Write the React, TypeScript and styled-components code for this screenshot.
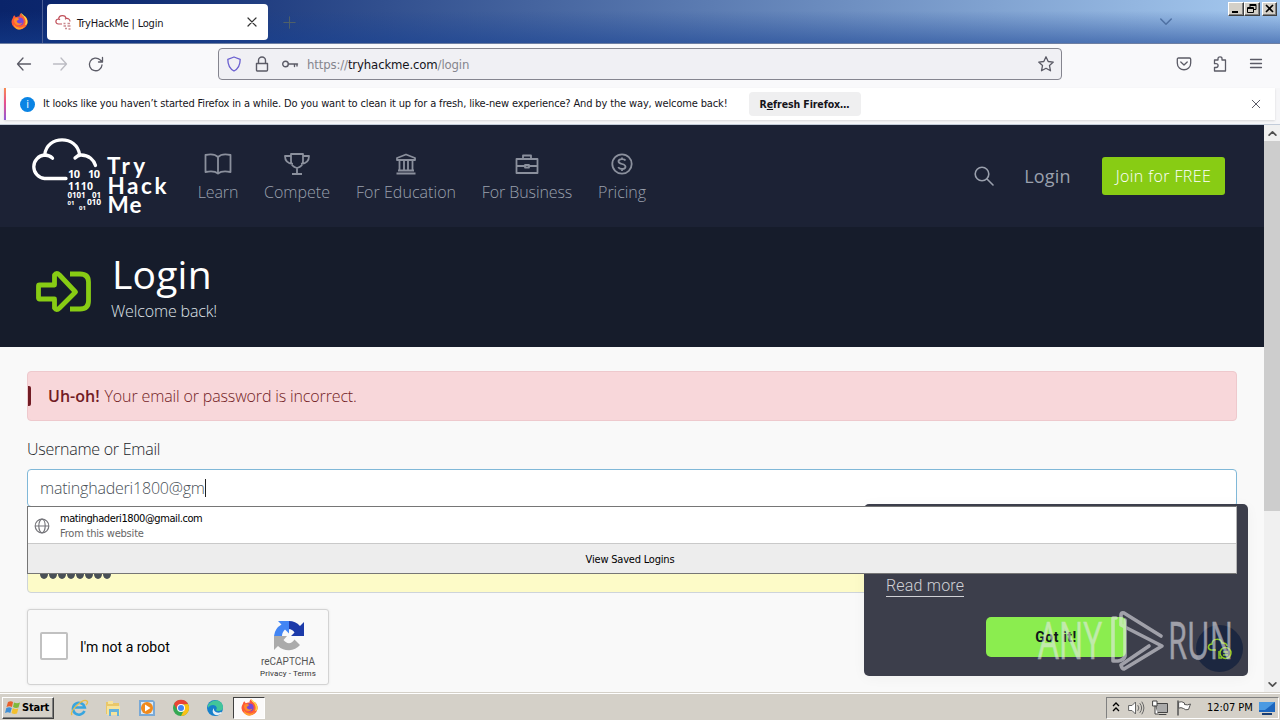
import React from 'react'
import styled, { createGlobalStyle } from 'styled-components'

const UI = `'DejaVu Sans Condensed', 'DejaVu Sans', sans-serif`
const BODY = `'Open Sans', 'Noto Sans', sans-serif`

const GlobalStyle = createGlobalStyle`
  * { box-sizing: border-box; }
  body { margin: 0; overflow: hidden; }
  button { padding: 0; border: 0; background: none; font: inherit; color: inherit; }
  svg { display: block; flex: none; overflow: visible; }
`

const Screen = styled.div`
  width: 1280px;
  height: 720px;
  display: flex;
  flex-direction: column;
  overflow: hidden;
  font-family: ${UI};
  font-size: 11px;
`

// text whose tracking is tuned to the width of its label
const Label = styled.span<{ $ls?: number }>`
  white-space: nowrap;
  letter-spacing: ${p => p.$ls || 0}px;
`

/* ---------- browser chrome ---------- */
const TabStrip = styled.div`
  height: 44px;
  flex: none;
  display: flex;
  padding-right: 3px;
  border-bottom: 1px solid #6e7fa2;
  background:
    linear-gradient(to bottom, transparent 25%, rgba(22, 64, 145, 0.55) 100%),
    linear-gradient(to right, #0a246a 0%, #0d2970 8%, #a6caf0 100%);
`
const HomeTab = styled.div`
  width: 43px;
  padding: 13px 0 0 11px;
  border-right: 1px solid #4b5f96;
`
const Tab = styled.div`
  width: 221px;
  height: 36px;
  margin: 4px 0 0 4px;
  padding: 0 11px 0 8px;
  display: flex;
  align-items: center;
  gap: 5px;
  border-radius: 4px;
  background: #fff;
  color: #15141a;
  svg:last-child { margin-left: auto; }
`
const TabTitle = styled.span`
  padding-top: 2px;
  white-space: nowrap;
  letter-spacing: -0.22px;
`
const NewTab = styled.div`
  flex: 1;
  padding: 16px 0 0 15px;
`
const ListTabs = styled.div`
  width: 68px;
  padding-top: 16px;
`
const WindowButtons = styled.div`
  display: flex;
  height: 14px;
  margin-top: 2px;
`
const WinButton = styled.div<{ $gap?: boolean }>`
  width: ${p => (p.$gap ? 15 : 16)}px;
  height: 14px;
  margin-left: ${p => (p.$gap ? 2 : 0)}px;
  background: #d4d0c8;
  border: 1px solid;
  border-color: #fff #404040 #404040 #fff;
  box-shadow: inset -1px -1px #808080;
`
const Toolbar = styled.div`
  height: 44px;
  flex: none;
  display: flex;
  align-items: center;
  padding: 0 16px 4px;
  background: #f9f9fb;
  color: #5b5b66;
`
const NavButtons = styled.div`
  width: 202px;
  display: flex;
  gap: 20px;
`
const UrlBar = styled.div`
  width: 844px;
  height: 32px;
  display: flex;
  align-items: center;
  padding: 0 7px;
  border: 1px solid #85858f;
  border-radius: 4px;
  background: #f0f0f4;
`
const Url = styled.div`
  flex: 1;
  margin-left: 9px;
  font-size: 13px;
  letter-spacing: -0.13px;
  color: #85858d;
  b { font-weight: 400; color: #15141a; }
`
const UrlIcons = styled.div`
  display: flex;
  gap: 12px;
`
const ToolbarEnd = styled.div`
  margin-left: auto;
  display: flex;
  gap: 20px;
`
const Notice = styled.div`
  height: 37px;
  flex: none;
  padding: 0 5px 5px 4px;
  border-bottom: 1px solid #c3ccd9;
  background: #f6f6f8;
`
const NoticeBar = styled.div`
  height: 32px;
  display: flex;
  align-items: center;
  padding-right: 14px;
  background: #fff;
  box-shadow: 0 1px 2px rgba(0, 0, 0, 0.12);
  color: #15141a;
`
const NoticeText = styled.span`
  padding-bottom: 1px;
  white-space: nowrap;
  letter-spacing: -0.145px;
`
const Stripe = styled.i`
  width: 2px;
  height: 32px;
  background: linear-gradient(#f88c50, #e8508c 45%, #9059d8);
`
const InfoDot = styled.span`
  width: 15px;
  height: 15px;
  margin: 0 8px 0 14px;
  border-radius: 50%;
  background: #0a84e4;
  color: #fff;
  font-size: 11px;
  line-height: 15px;
  text-align: center;
`
const RefreshButton = styled.button`
  width: 112px;
  height: 24px;
  margin: 0 auto 0 21px;
  border-radius: 4px;
  background: #efeff0;
  font-size: 10.5px;
  font-weight: 700;
  white-space: nowrap;
  letter-spacing: -0.1px;
`

/* ---------- web page ---------- */
const Viewport = styled.div`
  position: relative;
  height: 567px;
  flex: none;
  display: flex;
  overflow: hidden;
  font-family: ${BODY};
`
const Page = styled.div`
  width: 1264px;
  background: #f9f9f9;
`
const Scrollbar = styled.div`
  width: 16px;
  display: flex;
  flex-direction: column;
  background: #f0f0f0;
`
const ScrollArrow = styled.div`
  height: 16px;
  display: flex;
  align-items: center;
  justify-content: center;
`
const Thumb = styled.div`
  height: 370px;
  margin-bottom: auto;
  background: #cdcdcd;
`
const SiteHeader = styled.header`
  height: 102px;
  display: flex;
  align-items: center;
  padding: 0 39px 0 28px;
  background: #1c2235;
  color: #9aa0ad;
`
const SiteNav = styled.nav`
  display: flex;
  gap: 26px;
  margin: 3px 0 0 28px;
  font-size: 16px;
  font-weight: 300;
`
const NavItem = styled.a<{ $w: number }>`
  width: ${p => p.$w}px;
  display: flex;
  flex-direction: column;
  align-items: center;
  gap: 4px;
  line-height: 24px;
`
const HeaderEnd = styled.div`
  margin-left: auto;
  display: flex;
  align-items: center;
  font-size: 18px;
`
const LoginLink = styled.a`
  width: 47px;
  margin: 0 31px 0 30px;
  display: flex;
  justify-content: center;
`
const JoinButton = styled.button`
  width: 123px;
  height: 38px;
  border-radius: 3px;
  background: #88cc14;
  color: #fff;
  font-size: 16px;
  font-weight: 300;
`
const Hero = styled.section`
  height: 120px;
  display: flex;
  padding: 0 35px;
  background: #161c2b;
  color: #fff;
`
const HeroIcon = styled.div`
  width: 76px;
  padding-top: 43px;
`
const HeroTitle = styled.h1`
  margin: 18px 0 0 1px;
  font-size: 39px;
  font-weight: 400;
  line-height: 58px;
`
const HeroSub = styled.p`
  margin: -4px 0 0;
  font-size: 16px;
  font-weight: 300;
  line-height: 24px;
  color: #dfe2e8;
`
const Form = styled.form`
  padding: 24px 27px;
  font-size: 16px;
  font-weight: 300;
`
const Alert = styled.div`
  height: 50px;
  display: flex;
  align-items: center;
  gap: 5px;
  border: 1px solid #eec9cd;
  border-radius: 4px;
  background: #f8d7da;
  color: #721c24;
  b { font-weight: 600; }
`
const AlertMark = styled.i`
  width: 3px;
  height: 20px;
  margin-right: 12px;
  border-radius: 0 2px 2px 0;
  background: #721c24;
`
const FieldLabel = styled.label`
  display: block;
  height: 48px;
  padding-top: 16px;
  line-height: 24px;
  color: #212529;
`
const Field = styled.div<{ $focus?: boolean }>`
  height: 38px;
  display: flex;
  align-items: center;
  padding: 0 12px;
  border: 1px solid ${p => (p.$focus ? '#80b8d8' : '#ced4da')};
  border-radius: 4px;
  background: ${p => (p.$focus ? '#fff' : '#fdfbc8')};
  color: #495057;
`
const Caret = styled.i`
  width: 1px;
  height: 18px;
  background: #222;
`
const Dots = styled.div`
  display: flex;
  gap: 1px;
  i { width: 8px; height: 10px; border-radius: 50%; background: #495057; }
`
const Captcha = styled.div`
  width: 302px;
  height: 76px;
  margin-top: 16px;
  display: flex;
  align-items: center;
  padding: 0 10px 0 12px;
  border: 1px solid #d3d3d3;
  border-radius: 3px;
  background: #f9f9f9;
  box-shadow: 0 0 3px rgba(0, 0, 0, 0.08);
  font-family: Roboto, sans-serif;
  font-size: 14px;
  font-weight: 400;
  color: #000;
`
const CheckBox = styled.span`
  width: 28px;
  height: 28px;
  margin: 0 12px 2px 0;
  border: 2px solid #c1c1c1;
  border-radius: 2px;
  background: #fff;
`
const CaptchaBrand = styled.div`
  width: 60px;
  margin-left: auto;
  padding-top: 5px;
  display: flex;
  flex-direction: column;
  align-items: center;
  font-size: 10px;
  line-height: 12px;
  color: #555;
  svg { margin: 0 0 4px 2px; }
  small { font-size: 8px; color: #333; line-height: 11px; white-space: nowrap; letter-spacing: 0.1px; }
`

/* ---------- overlays above the page ---------- */
const CookiePanel = styled.aside`
  position: absolute;
  left: 864px;
  top: 379px;
  width: 384px;
  height: 172px;
  padding: 70px 22px 0;
  border-radius: 5px;
  background: #3c3e4b;
  box-shadow: 0 2px 14px rgba(0, 0, 0, 0.04);
  color: #d0d1d6;
  font-family: Roboto, sans-serif;
  font-size: 16px;
  font-weight: 300;
`
const ReadMore = styled.a`
  display: table;
  height: 21px;
  line-height: 20px;
  padding-top: 2px;
  border-bottom: 1px solid #d0d1d6;
  letter-spacing: 0.2px;
`
const GotIt = styled.button`
  display: block;
  width: 140px;
  height: 40px;
  margin: 20px 0 0 100px;
  border-radius: 5px;
  background: #8bed4f;
  color: #10151a;
  font-size: 14px;
  font-weight: 700;
  letter-spacing: 0.5px;
`
const LoginPopup = styled.div`
  position: absolute;
  left: 27px;
  top: 381px;
  width: 1210px;
  height: 68px;
  border: 1px solid #767676;
  border-right-color: #b5b5b5;
  background: #fff;
  font-family: ${UI};
  font-size: 11px;
  color: #000;
`
const SavedLogin = styled.div`
  height: 37px;
  display: flex;
  align-items: center;
  gap: 10px;
  padding: 2px 0 0 6px;
  line-height: 15px;
  letter-spacing: -0.2px;
  border-bottom: 1px solid #c9c9c9;
  small { display: block; font-size: 11px; color: #666; }
`
const ViewLogins = styled.div`
  height: 29px;
  display: flex;
  align-items: center;
  justify-content: center;
  padding: 2px 4px 0 0;
  background: #ededed;
`
const Watermark = styled.div`
  position: absolute;
  left: 1036px;
  top: 483px;
`

/* ---------- taskbar ---------- */
const Taskbar = styled.footer`
  height: 28px;
  flex: none;
  display: flex;
  align-items: center;
  padding: 2px 1px 0 2px;
  border-top: 1px solid #d4d0c8;
  box-shadow: inset 0 1px #fff;
  background: #d4d0c8;
`
const StartButton = styled.button`
  width: 52px;
  height: 22px;
  display: flex;
  align-items: center;
  gap: 1px;
  padding-left: 2px;
  border: 1px solid;
  border-color: #fff #404040 #404040 #fff;
  box-shadow: inset -1px -1px #808080;
  font-size: 11px;
  font-weight: 700;
`
const QuickLaunch = styled.div`
  display: flex;
  gap: 16px;
  margin: 0 9px 0 16px;
`
const ActiveTask = styled.div`
  width: 32px;
  height: 22px;
  padding: 1px 0 0 7px;
  border: 1px solid;
  border-color: #404040 #fff #fff #404040;
  background: #fbfafa;
`
const Tray = styled.div`
  width: 173px;
  height: 22px;
  margin-left: auto;
  display: flex;
  align-items: center;
  padding: 0 2px 0 5px;
  gap: 8px;
  border: 1px solid;
  border-color: #808080 #fff #fff #808080;
`
const Clock = styled.time`
  margin-left: 7px;
  margin-right: -2px;
  white-space: nowrap;
  letter-spacing: -0.05px;
`

type StrokeProps = { size?: number; box?: string; w?: number; color?: string; children: React.ReactNode }

const Stroke = ({ size = 16, box = '0 0 16 16', w = 1.3, color = 'currentColor', children }: StrokeProps) => (
  <svg width={size} height={size} viewBox={box} fill="none" stroke={color} strokeWidth={w} strokeLinecap="round" strokeLinejoin="round">
    {children}
  </svg>
)

const Firefox = ({ size = 17 }) => (
  <svg width={size} height={size} viewBox="0 0 18 18">
    <path d="M2 5c.3-1.2.8-2 1.5-2.700L5 4.600C6.500 4 7.500 3.500 9 4c-.3-1.500.5-3 1.700-4 .2 2 1.500 2.700 2.700 4l1.200-.7C17 5.500 18 8 17.500 10.500A8.600 8.600 0 0 1 .5 9.500C.5 8 1 6.500 2 5Z" fill="#ff5a36" />
    <path d="M10.700 0c.2 2 1.500 2.700 2.700 4 2 2.500 3 6 1 9l2.600-1C19 6 14 3 10.700 0Z" fill="#ffd33c" />
    <path d="M3 12c2 4 9 5 12 1-1.500 4-6 5.500-9 4-2-1-3-3-3-5Z" fill="#ffa22b" />
    <circle cx="9.200" cy="9" r="4.200" fill="#7647d8" />
    <path d="M3.500 6c2-1.400 4-.8 5.500.6-1.600.2-1.500 1.400-3 1.700.2 3 4 3.400 6 1.700-1 3.500-6 4-8 .5C3 8.800 3 7.500 3.500 6Z" fill="#ff8a2a" />
  </svg>
)

const FavIcon = () => (
  <svg width="17" height="17" viewBox="0 0 17 17" fill="none" stroke="#c0505a" strokeWidth="1.200">
    <path d="M7 10H3.500C-.2 9.700.2 5 3.600 5 4 .5 10.500.5 11 4.500c2.500-.4 4 1 4 3M3.600 5l1.500.6M11 4.500l-1 .7" />
    <path d="M8.500 9.500h2M12.500 9.500h2.500M8.500 12h2.500M12.500 12h3M10 14.500h2M13.500 15h2" strokeWidth="1.500" stroke="#c98b91" />
  </svg>
)

const Logo = () => (
  <svg width="142" height="82" viewBox="28 10 142 82" fill="none">
    <path
      d="M66 53.500H44.500a11.800 11.800 0 0 1 0-23.500q5 0 8 3.200M44.800 29.500C47 10 77 10 79.500 29.500M75 33q3-3 6-3c8 0 13 5 14.500 10.500"
      stroke="#fff" strokeWidth="3.300" strokeLinecap="round"
    />
    <g fill="#fff" fontFamily="'Noto Sans', sans-serif" fontWeight="700">
      <text x="68" y="53" fontSize="11" textLength="12">10</text>
      <text x="88" y="53" fontSize="11" textLength="12">10</text>
      <text x="68" y="64.500" fontSize="10.500" textLength="25">1110</text>
      <text x="67.500" y="73" fontSize="8" textLength="18">0101</text>
      <text x="92" y="73" fontSize="8" textLength="9">01</text>
      <text x="67.500" y="80" fontSize="6" textLength="7">01</text>
      <text x="87" y="79.500" fontSize="8.500" textLength="14">010</text>
      <text x="79" y="85" fontSize="6" textLength="7">01</text>
      <g fontFamily="Lato, sans-serif" fontSize="22.500">
        <text x="107" y="49" textLength="38">Try</text>
        <text x="107.500" y="69" textLength="59">Hack</text>
        <text x="107.500" y="88" textLength="34">Me</text>
      </g>
    </g>
  </svg>
)

const RecaptchaIcon = () => (
  <svg width="32" height="32" viewBox="0 0 32 32">
    <path d="M31 16V2l-4 4A15 15 0 0 0 15.500 1v8a7 7 0 0 1 6 3.500L18 16Z" fill="#1c3aa9" />
    <path d="M16 1H5l3.500 3.500A15 15 0 0 0 1 16h8c0-3 1.500-5 3-6.500l4 4Z" fill="#4285f4" />
    <path d="M1 16v14l4-4a15 15 0 0 0 22-1l-5.500-5.500c-3 5-8 4.500-11 .5L14 16Z" fill="#ababab" />
  </svg>
)

const AnyRun = () => (
  <svg width="208" height="66" viewBox="1036 608 208 66">
    <circle cx="1219.500" cy="648.500" r="23.500" fill="#1c2740" />
    <g fill="none" stroke="#8ac926" strokeWidth="1.500">
      <path d="M1216 650h-5c-4-1-3-6 1-6 0-6 9-6 10-1 3-.5 5 1 5 3" />
      <circle cx="1225.500" cy="653" r="5.500" />
      <path d="M1219 651v7h3M1223 652h5M1223 655h5" />
    </g>
    <g opacity="0.58">
      <g fill="#e8e8ee" stroke="#e8e8ee" strokeWidth="0.500" fontFamily="'Open Sans', sans-serif" fontWeight="400" fontSize="52">
        <text x="1038" y="659" textLength="64" lengthAdjust="spacingAndGlyphs">ANY</text>
        <text x="1168" y="659" textLength="65" lengthAdjust="spacingAndGlyphs">RUN</text>
      </g>
      <g fill="none" stroke="#e8e8ee" strokeWidth="3.600" strokeLinejoin="round" strokeLinecap="round">
        <path d="M1116 618h-3v43h5q6-1 7-5V620" />
        <path d="M1161 636l-37-23q-3-1-3 2v10l41 21-38 23q-2 0-3-4l28-19" />
      </g>
    </g>
  </svg>
)

const Globe = () => (
  <Stroke color="#77777c" w={1.2}>
    <circle cx="8" cy="8" r="6.800" />
    <ellipse cx="8" cy="8" rx="3.200" ry="6.800" />
    <path d="M1.500 8h13" />
  </Stroke>
)

const NAV = [
  { text: 'Learn', w: 40, ls: -0.1, icon: <path d="M14 5C11 2 6 2 1.500 3v17c4.500-1 9.500-1 12.500 1.500C17 19 22 19 26.500 20V3C22 2 17 2 14 5Zm0 0v16" /> },
  { text: 'Compete', w: 66, ls: 0, icon: <path d="M8 2h12v7c0 4-2 6-6 7-4-1-6-3-6-7ZM8 4H2c0 5 2 7.500 8 8M20 4h6c0 5-2 7.500-8 8M14 16v6m-5 0h10" /> },
  { text: 'For Education', w: 100, ls: 0.05, icon: <path d="M5 8V6l9-3.500L23 6v2ZM7.500 9v9M12 9v9M16 9v9M20.500 9v9M6 18.500h16M4.500 21.500h19" /> },
  { text: 'For Business', w: 90, ls: -0.1, icon: <path d="M3.500 7h21v14h-21ZM10 7V3.500h8V7M3.500 14H12m4 0h8.500M12 13h4v2.500h-4Z" /> },
  { text: 'Pricing', w: 48, ls: -0.05, icon: <><circle cx="14" cy="12" r="9.700" /><path d="M17.500 8.500c-1-2-7-2-7 .8 0 3.700 7 1.700 7 5.400 0 3-6 3-7.300.5M14 5.500v2M14 17v2" /></> },
]

const BrowserChrome = () => (
  <>
    <TabStrip>
      <HomeTab><Firefox /></HomeTab>
      <Tab>
        <FavIcon />
        <TabTitle>TryHackMe | Login</TabTitle>
        <Stroke size={10} box="0 0 10 10" w={1.2} color="#333"><path d="M1 1l8 8M9 1l-8 8" /></Stroke>
      </Tab>
      <NewTab><Stroke size={13} color="#4f6068" w={1.3}><path d="M8 1v14M1 8h14" /></Stroke></NewTab>
      <ListTabs><Stroke size={12} color="#4f71a3" w={2}><path d="M1 4l7 7 7-7" /></Stroke></ListTabs>
      <WindowButtons>
        <WinButton><svg width="12" height="11"><path d="M3 9h6" stroke="#000" strokeWidth="2" /></svg></WinButton>
        <WinButton><svg width="13" height="11" fill="none" stroke="#000"><path d="M5 1.500h6v5H9M5 2.500h6M5 1v3M2.500 4.500h6v5h-6ZM2 5.500h7" /></svg></WinButton>
        <WinButton $gap><svg width="12" height="11"><path d="M3 2l7 7M10 2l-7 7" stroke="#000" strokeWidth="1.600" /></svg></WinButton>
      </WindowButtons>
    </TabStrip>
    <Toolbar>
      <NavButtons>
        <Stroke><path d="M14.500 8h-13M7 2L1.500 8 7 14" /></Stroke>
        <Stroke color="#bcbcc3"><path d="M1.500 8h13M9 2l5.500 6L9 14" /></Stroke>
        <Stroke><path d="M14 9a6.300 6.300 0 1 1-2-5.200L14.500 6V1.500M10.500 6h4" /></Stroke>
      </NavButtons>
      <UrlBar>
        <UrlIcons>
          <Stroke color="#6a5fd0"><path d="M8 1L1.800 3.300C1.800 10 4 13 8 15c4-2 6.200-5 6.200-11.700Z" /></Stroke>
          <Stroke w={1.4}><path d="M2.500 7.500h11V14a1 1 0 0 1-1 1h-9a1 1 0 0 1-1-1ZM4.500 7V4.500a3.500 3.500 0 0 1 7 0V7" /></Stroke>
          <Stroke w={1.4}><circle cx="3.500" cy="8" r="2.800" /><path d="M6.500 8H15.500M12.500 8v2.500M15 8v2" /></Stroke>
        </UrlIcons>
        <Url>https://<b>tryhackme.com</b>/login</Url>
        <Stroke><path d="M8 .8l2.200 4.700 5.100.6-3.800 3.500 1 5.200L8 12.300l-4.500 2.500 1-5.200L.7 6.100l5.100-.6Z" /></Stroke>
      </UrlBar>
      <ToolbarEnd>
        <Stroke><path d="M2.500 2h11c.8 0 1.200.5 1.200 1.200V7c0 9-13.400 9-13.400 0V3.200C1.300 2.500 1.700 2 2.500 2ZM4.800 6L8 9l3.200-3" /></Stroke>
        <Stroke><path d="M6 4V2.500C6 .3 10 .3 10 2.500V4h3.500v11h-11v-3.500H4c2.800 0 2.800-3.800 0-3.800H2.500V4Z" /></Stroke>
        <Stroke w={1.3}><path d="M2.500 3.500h11M2.500 7.500h11M2.500 11.500h11" /></Stroke>
      </ToolbarEnd>
    </Toolbar>
    <Notice>
      <NoticeBar>
        <Stripe />
        <InfoDot>i</InfoDot>
        <NoticeText>It looks like you haven’t started Firefox in a while. Do you want to clean it up for a fresh, like-new experience? And by the way, welcome back!</NoticeText>
        <RefreshButton>R<u>e</u>fresh Firefox…</RefreshButton>
        <Stroke size={10} w={1.6} color="#5b5b66"><path d="M2 2l12 12M14 2L2 14" /></Stroke>
      </NoticeBar>
    </Notice>
  </>
)

const LoginPage = () => (
  <Page>
    <SiteHeader>
      <Logo />
      <SiteNav>
        {NAV.map(item => (
          <NavItem key={item.text} $w={item.w}>
            <svg width="28" height="24" viewBox="0 0 28 24" fill="none" stroke="#8b909d" strokeWidth="1.800" strokeLinejoin="round">{item.icon}</svg>
            <Label $ls={item.ls}>{item.text}</Label>
          </NavItem>
        ))}
      </SiteNav>
      <HeaderEnd>
        <Stroke size={20} box="0 0 20 20" w={1.6}><circle cx="8" cy="8" r="6.800" /><path d="M13 13l6 6" /></Stroke>
        <LoginLink><Label $ls={0.15}>Login</Label></LoginLink>
        <JoinButton><Label $ls={0.4}>Join for FREE</Label></JoinButton>
      </HeaderEnd>
    </SiteHeader>
    <Hero>
      <HeroIcon>
        <svg width="57" height="44" viewBox="0 0 57 44" fill="none" stroke="#88cc14" strokeWidth="4.800" strokeLinejoin="round">
          <path d="M4.500 15h15V5q2-3 5 0l16 17-16 16q-3 3-5 0V29h-15q-1 0-1-1V16q0-1 1-1Z" />
          <path d="M35 4h10q8.500 0 8.500 8v19q0 8-8.500 8H35" />
        </svg>
      </HeroIcon>
      <div>
        <HeroTitle><Label $ls={0.2}>Login</Label></HeroTitle>
        <HeroSub><Label $ls={-0.15}>Welcome back!</Label></HeroSub>
      </div>
    </Hero>
    <Form>
      <Alert>
        <AlertMark />
        <b>Uh-oh!</b>
        <Label $ls={-0.14}>Your email or password is incorrect.</Label>
      </Alert>
      <FieldLabel><Label $ls={-0.25}>Username or Email</Label></FieldLabel>
      <Field $focus><Label $ls={-0.2}>matinghaderi1800@gm</Label><Caret /></Field>
      <FieldLabel>Password</FieldLabel>
      <Field><Dots>{Array.from({ length: 8 }, (_, i) => <i key={i} />)}</Dots></Field>
      <Captcha>
        <CheckBox />
        <Label>I'm not a robot</Label>
        <CaptchaBrand>
          <RecaptchaIcon />
          reCAPTCHA
          <small>Privacy - Terms</small>
        </CaptchaBrand>
      </Captcha>
    </Form>
  </Page>
)

const TaskIcons = () => (
  <QuickLaunch>
    <svg width="18" height="18" viewBox="0 0 18 18" fill="none">
      <path d="M14.500 12a6 6 0 1 1 .3-3.500H5" stroke="#38a5df" strokeWidth="2.600" />
      <path d="M2 16C-1 12 13-1 17 2c1 1 0 3-1 4" stroke="#e9bd45" strokeWidth="1.300" />
    </svg>
    <svg width="18" height="18" viewBox="0 0 18 18">
      <path d="M2 3h5l1 1h7v11H2Z" fill="#e9c768" />
      <path d="M4 2h5v3H4ZM3 7h13v9H3Z" fill="#f6e39b" />
      <path d="M5 10h10v7h-2v-4H7v4H5Z" fill="#65b3dc" />
    </svg>
    <svg width="18" height="18" viewBox="0 0 18 18">
      <path d="M1 1h14l2 2v14H1Z" fill="#79a9d6" />
      <path d="M3 3h12v12H3Z" fill="#d9e9f7" />
      <circle cx="9" cy="9" r="6" fill="#f08a1c" />
      <path d="M7 5.500L12.500 9 7 12.500Z" fill="#fff" />
    </svg>
    <svg width="18" height="18" viewBox="0 0 18 18">
      <circle cx="9" cy="9" r="8" fill="#34a853" />
      <path d="M2 5a8 8 0 0 1 14 0L9 6 5.500 11Z" fill="#ea4335" />
      <path d="M16 5a8 8 0 0 1-7 12l3.500-7L11 5.500Z" fill="#fbc116" />
      <circle cx="9" cy="9" r="4" fill="#fff" />
      <circle cx="9" cy="9" r="3" fill="#4285f4" />
    </svg>
    <svg width="18" height="18" viewBox="0 0 18 18">
      <circle cx="9" cy="9" r="8" fill="#1680cb" />
      <path d="M2 6c3-6 15-7 15 3 0 3-6 4-7 2 2-2 0-5-3-5-2 0-4 1-5 3Z" fill="#42c59a" />
      <path d="M8 9c-1 3 3 6 7 4l1 1c-6 5-12 0-8-5Z" fill="#e4eef4" />
    </svg>
  </QuickLaunch>
)

const WindowsTaskbar = () => (
  <Taskbar>
    <StartButton>
      <svg width="16" height="16" viewBox="0 0 16 16">
        <path d="M3 2q3-1.500 5 0L7 7Q4.500 5.500 1.500 7Z" fill="#e8602c" />
        <path d="M9 2.500q3 1.500 6 0L13.500 7.500q-3 1-5.500-.5Z" fill="#7fb93c" />
        <path d="M1.300 8q3-1.500 5.500 0l-1.500 5Q3 11.500 0 13Z" fill="#3f8fd6" />
        <path d="M7.800 8q2.500 1.500 5.500.5L12 13.500q-3 1-5.500-.5Z" fill="#f3c02e" />
      </svg>
      <Label $ls={-0.2}>Start</Label>
    </StartButton>
    <TaskIcons />
    <ActiveTask><Firefox /></ActiveTask>
    <Tray>
      <svg width="8" height="12" viewBox="0 0 8 12" fill="none" stroke="#000" strokeWidth="1.300"><path d="M1 4l3-3 3 3M1 9l3-3 3 3" /></svg>
      <Stroke color="#666" w={1}><path d="M1 5.500h3L7.500 2v12L4 10.500H1Z" fill="#fff" /><path d="M10 5.500q2 2.500 0 5M12 3.500q3.500 4.500 0 9M14 2q4 6 0 12" /></Stroke>
      <Stroke color="#444" w={1}><path d="M4.500 3.500h11v9h-11ZM7 14.500h7" fill="#aaa" /><path d="M1 1h4v5H1ZM3 6v8h3" fill="#fff" /></Stroke>
      <Stroke color="#555" w={1}><path d="M2 1v14" strokeWidth="1.500" /><path d="M3 2q3-1 5.500 1v1.500q3 1 6-.5l-2 5.500q-3 1-5-1Q5 7 3 8Z" fill="#fff" /></Stroke>
      <Clock>12:07 PM</Clock>
      <svg width="16" height="14" viewBox="0 0 16 14"><path d="M0 1h16v10H0Z" fill="#1c65bd" /><path d="M0 1h16L6 9H0Z" fill="#4b9ae2" /><path d="M3 12h10v2H3Z" fill="#173d73" /></svg>
    </Tray>
  </Taskbar>
)

export default function App() {
  return (
    <Screen>
      <GlobalStyle />
      <BrowserChrome />
      <Viewport>
        <LoginPage />
        <Scrollbar>
          <ScrollArrow><Stroke size={9} color="#505050" w={3}><path d="M2 11l6-6 6 6" /></Stroke></ScrollArrow>
          <Thumb />
          <ScrollArrow><Stroke size={9} color="#505050" w={3}><path d="M2 5l6 6 6-6" /></Stroke></ScrollArrow>
        </Scrollbar>
        <CookiePanel>
          <ReadMore>Read more</ReadMore>
          <GotIt>Got it!</GotIt>
        </CookiePanel>
        <LoginPopup>
          <SavedLogin>
            <Globe />
            <div>
              <Label $ls={-0.42}>matinghaderi1800@gmail.com</Label>
              <small>From this website</small>
            </div>
          </SavedLogin>
          <ViewLogins><Label $ls={-0.2}>View Saved Logins</Label></ViewLogins>
        </LoginPopup>
        <Watermark><AnyRun /></Watermark>
      </Viewport>
      <WindowsTaskbar />
    </Screen>
  )
}
